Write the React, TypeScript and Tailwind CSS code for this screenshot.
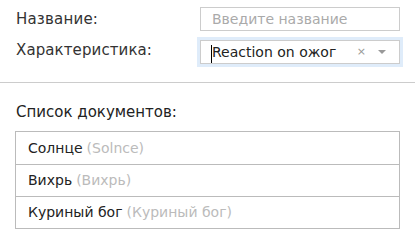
const font = { fontFamily: '"DejaVu Sans", "Liberation Sans", sans-serif' };

const docs = [
  { name: "Солнце", alt: "Solnce" },
  { name: "Вихрь", alt: "Вихрь" },
  { name: "Куриный бог", alt: "Куриный бог" },
];

export default function App() {
  return (
    <div className="w-[415px] h-[248px] bg-white text-[#333]" style={font}>
      <div className="pt-[7px] pl-4 pr-[15px]">
        <div className="flex items-center h-6">
          <div className="w-[184px] text-[15px] leading-none tracking-[0.2px]">Название:</div>
          <div className="w-[200px] h-6 border border-[#ccc] flex items-center pl-[11px] text-[14px] text-[#aaa]">
            Введите название
          </div>
        </div>
        <div className="flex items-center h-6 mt-[9px]">
          <div className="w-[184px] text-[15px] leading-none -mt-[3px] tracking-[0.1px]">Характеристика:</div>
          <div className="w-[200px] h-6 border border-[#ccc] ring-[3px] ring-[#dfecfa] flex items-center pl-[10px] pr-[13px] text-[14px] text-[#222]">
            <span className="w-px h-[18px] bg-black mt-[3px]" />
            <span className="flex-1">Reaction on ожог</span>
            <span className="text-[11px] text-[#999] mr-[12px]">×</span>
            <svg width="8" height="4" viewBox="0 0 8 4">
              <path d="M0 0h8L4 4z" fill="#999" />
            </svg>
          </div>
        </div>
      </div>
      <div className="mt-[18px] border-t border-[#ccc]" />
      <div className="pl-4 pr-[15px] pt-[19px]">
        <div className="text-[15px] leading-5 text-[#222]">Список документов:</div>
        <div className="mt-[9px] ml-[-1px] border border-[#bbb]">
          {docs.map((d, i) => (
            <div
              key={d.name}
              className={`h-8 flex items-center pl-3 text-[14px] text-[#222] ${i > 0 ? "border-t border-[#bbb]" : ""}`}
            >
              {d.name}
              <span className="ml-1 text-[#bbb]">({d.alt})</span>
            </div>
          ))}
        </div>
      </div>
    </div>
  );
}
